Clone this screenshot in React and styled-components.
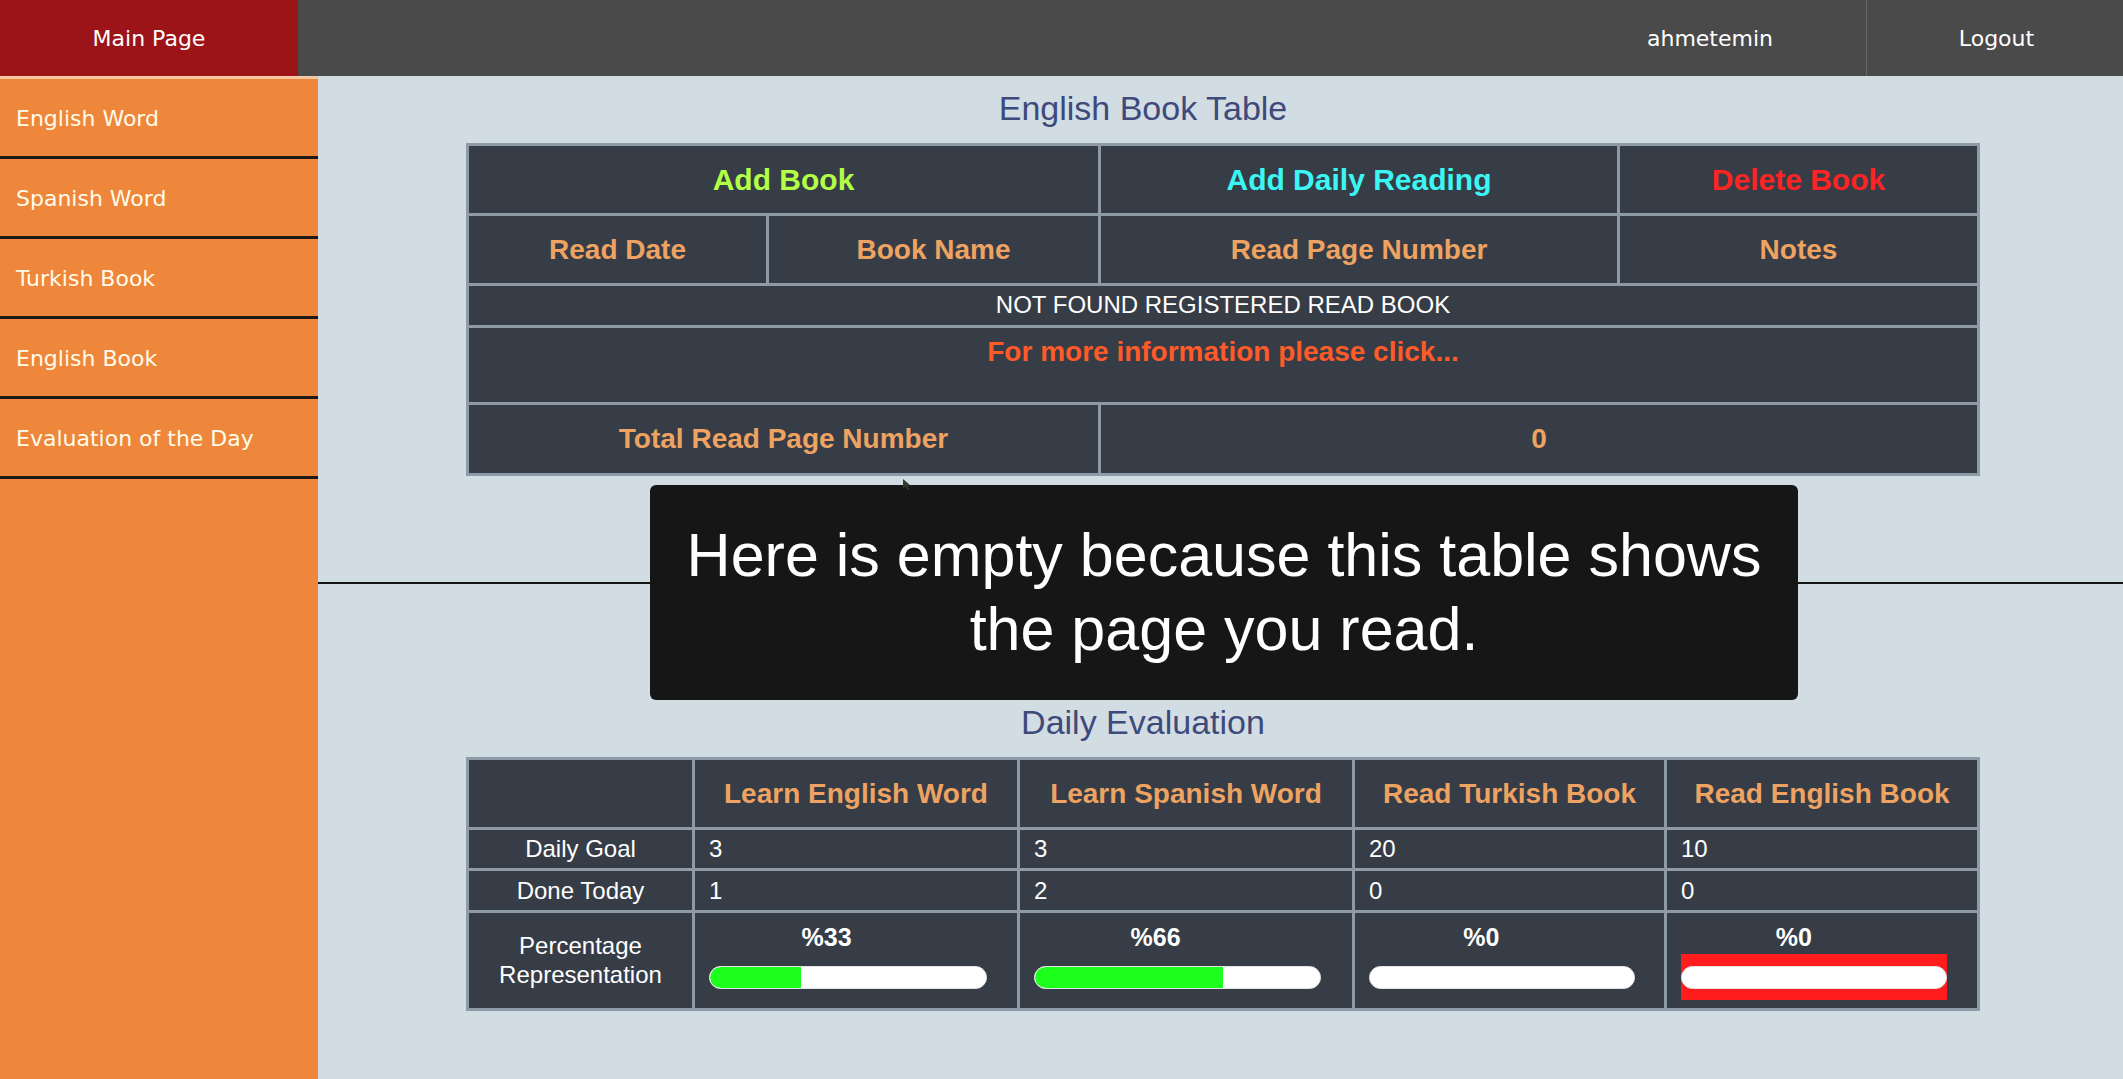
import React from "react";
import styled, { createGlobalStyle } from "styled-components";

const GlobalStyle = createGlobalStyle`
  *, *::before, *::after { box-sizing: border-box; }
  html, body { margin: 0; padding: 0; }
  body {
    background: #d2dde3;
    font-family: "Liberation Sans", Arial, sans-serif;
    overflow: hidden;
  }
`;

const Page = styled.div`
  display: flex;
  flex-direction: column;
  height: 100vh;
  width: 100%;
`;

const Header = styled.header`
  display: flex;
  align-items: stretch;
  height: 76px;
  background: #4a4a4a;
  font-family: "DejaVu Sans", Verdana, sans-serif;
  font-size: 22px;
  color: #ffffff;
  flex-shrink: 0;
`;

const Brand = styled.div`
  width: 298px;
  background: #9c1418;
  display: flex;
  align-items: center;
  justify-content: center;
`;

const HeaderSpacer = styled.div`
  flex: 1;
`;

const UserName = styled.div`
  display: flex;
  align-items: center;
  padding-right: 93px;
`;

const LogoutButton = styled.div`
  width: 257px;
  padding-left: 3px;
  border-left: 1px solid #676767;
  display: flex;
  align-items: center;
  justify-content: center;
`;

const Body = styled.div`
  flex: 1;
  display: flex;
  min-height: 0;
`;

const Sidebar = styled.nav`
  width: 318px;
  flex-shrink: 0;
  background: #ee873b;
  border-top: 3px solid #f6c8a2;
  display: flex;
  flex-direction: column;
`;

const NavItem = styled.div`
  height: 80px;
  border-bottom: 3px solid #1d1915;
  display: flex;
  align-items: center;
  padding: 2px 0 0 16px;
  font-family: "DejaVu Sans", Verdana, sans-serif;
  font-size: 22px;
  color: #fffbea;
`;

const Main = styled.main`
  position: relative;
  flex: 1;
  display: flex;
  flex-direction: column;
`;

const Title = styled.h2`
  margin: ${(p) => p.$mt}px 0 0 0;
  padding-right: 155px;
  height: 40px;
  line-height: 40px;
  text-align: center;
  font-weight: normal;
  font-size: 34px;
  color: #3e4a7b;
`;

const Table = styled.table`
  margin: ${(p) => p.$mt}px 0 0 148px;
  width: 1514px;
  table-layout: fixed;
  border-collapse: separate;
  border-spacing: 3px;
  background: #8e9ba7;
`;

const Col = styled.col`
  width: ${(p) => p.$w}px;
`;

const Cell = styled.td`
  background: #363d46;
  height: ${(p) => p.$h}px;
  padding: 0;
  text-align: ${(p) => p.$align || "center"};
  vertical-align: middle;
  color: ${(p) => p.$color || "#ffffff"};
  font-size: ${(p) => p.$size || 24}px;
  font-weight: ${(p) => (p.$bold ? "bold" : "normal")};
  line-height: 1.2;
`;

const LinkCell = styled(Cell)`
  vertical-align: top;
  padding-top: 7px;
`;

const ValueCell = styled(Cell)`
  text-align: left;
  padding: 1px 14px 0 14px;
`;

const LabelCell = styled(Cell)`
  padding-top: 1px;
`;

const BarCell = styled(Cell)`
  vertical-align: top;
  text-align: left;
  padding: 10px 14px 0 14px;
`;

const PercentLabel = styled.div`
  width: 80%;
  text-align: center;
  font-size: 25px;
  font-weight: bold;
  line-height: 28px;
  height: 28px;
  color: #ffffff;
`;

const BarFrame = styled.div`
  margin-top: 3px;
  width: 94.5%;
  padding: 12px 0 11px 0;
  background: ${(p) => (p.$alert ? "#ff1c1c" : "transparent")};
`;

const Bar = styled.div`
  height: 23px;
  border-radius: 12px;
  background: #ffffff;
  overflow: hidden;
  border: 1px solid #e4e4e4;
`;

const BarFill = styled.div`
  height: 100%;
  background: #1cff1c;
  border-radius: 11px 0 0 11px;
`;

const Rule = styled.hr`
  margin: 106px 0 0 0;
  border: none;
  height: 2px;
  background: #151515;
`;

const Tooltip = styled.div`
  position: absolute;
  left: 332px;
  top: 409px;
  width: 1148px;
  height: 215px;
  padding: 33px 20px;
  background: #161616;
  border-radius: 6px;
  color: #ffffff;
  font-size: 61px;
  line-height: 74px;
  text-align: center;
  z-index: 2;
`;

const Cursor = styled.svg`
  position: absolute;
  left: 584px;
  top: 403px;
  z-index: 3;
`;

const books = { add: "Add Book", daily: "Add Daily Reading", del: "Delete Book" };

const evaluation = [
  { name: "Learn English Word", goal: 3, done: 1 },
  { name: "Learn Spanish Word", goal: 3, done: 2 },
  { name: "Read Turkish Book", goal: 20, done: 0 },
  { name: "Read English Book", goal: 10, done: 0, alert: true },
];

const navItems = ["English Word", "Spanish Word", "Turkish Book", "English Book", "Evaluation of the Day"];

const SANDY = "#eea362";

export default function App() {
  return (
    <>
      <GlobalStyle />
      <Page>
        <Header>
          <Brand>Main Page</Brand>
          <HeaderSpacer />
          <UserName>ahmetemin</UserName>
          <LogoutButton>Logout</LogoutButton>
        </Header>
        <Body>
          <Sidebar>
            {navItems.map((n) => (
              <NavItem key={n}>{n}</NavItem>
            ))}
          </Sidebar>
          <Main>
            <Title $mt={12}>English Book Table</Title>
            <Table $mt={15}>
              <colgroup>
                <Col $w={297} />
                <Col $w={329} />
                <Col $w={516} />
                <Col $w={357} />
              </colgroup>
              <tbody>
                <tr>
                  <Cell $h={67} colSpan={2} $bold $size={30} $color="#b2ff46">{books.add}</Cell>
                  <Cell $h={67} $bold $size={30} $color="#3cf6f4">{books.daily}</Cell>
                  <Cell $h={67} $bold $size={30} $color="#ff2323">{books.del}</Cell>
                </tr>
                <tr>
                  <Cell $h={67} $bold $size={28} $color={SANDY}>Read Date</Cell>
                  <Cell $h={67} $bold $size={28} $color={SANDY}>Book Name</Cell>
                  <Cell $h={67} $bold $size={28} $color={SANDY}>Read Page Number</Cell>
                  <Cell $h={67} $bold $size={28} $color={SANDY}>Notes</Cell>
                </tr>
                <tr>
                  <Cell $h={39} colSpan={4} $size={24}>NOT FOUND REGISTERED READ BOOK</Cell>
                </tr>
                <tr>
                  <LinkCell $h={74} colSpan={4} $bold $size={28} $color="#ff5a27">
                    For more information please click...
                  </LinkCell>
                </tr>
                <tr>
                  <Cell $h={68} colSpan={2} $bold $size={28} $color={SANDY}>Total Read Page Number</Cell>
                  <Cell $h={68} colSpan={2} $bold $size={28} $color={SANDY}>0</Cell>
                </tr>
              </tbody>
            </Table>
            <Rule />
            <Title $mt={118}>Daily Evaluation</Title>
            <Table $mt={15}>
              <colgroup>
                <Col $w={223} />
                <Col $w={322} />
                <Col $w={332} />
                <Col $w={309} />
                <Col $w={310} />
              </colgroup>
              <tbody>
                <tr>
                  <Cell $h={67} />
                  {evaluation.map((e) => (
                    <Cell key={e.name} $h={67} $bold $size={28} $color={SANDY}>{e.name}</Cell>
                  ))}
                </tr>
                <tr>
                  <LabelCell $h={38} $size={24}>Daily Goal</LabelCell>
                  {evaluation.map((e) => (
                    <ValueCell key={e.name} $h={38} $size={24}>{e.goal}</ValueCell>
                  ))}
                </tr>
                <tr>
                  <LabelCell $h={39} $size={24}>Done Today</LabelCell>
                  {evaluation.map((e) => (
                    <ValueCell key={e.name} $h={39} $size={24}>{e.done}</ValueCell>
                  ))}
                </tr>
                <tr>
                  <LabelCell $h={95} $size={24}>
                    Percentage
                    <br />
                    Representation
                  </LabelCell>
                  {evaluation.map((e) => {
                    const pct = Math.floor((e.done / e.goal) * 100);
                    return (
                      <BarCell key={e.name} $h={95}>
                        <PercentLabel>%{pct}</PercentLabel>
                        <BarFrame $alert={e.alert}>
                          <Bar>
                            <BarFill style={{ width: `${pct}%` }} />
                          </Bar>
                        </BarFrame>
                      </BarCell>
                    );
                  })}
                </tr>
              </tbody>
            </Table>
            <Cursor width="10" height="12" viewBox="0 0 10 12">
              <polygon points="1,0 1,10 3.5,7.5 6,11 7.5,10 5.2,6.8 8.5,6.5" fill="#2b3a2b" />
            </Cursor>
            <Tooltip>
              Here is empty because this table shows
              <br />
              the page you read.
            </Tooltip>
          </Main>
        </Body>
      </Page>
    </>
  );
}
